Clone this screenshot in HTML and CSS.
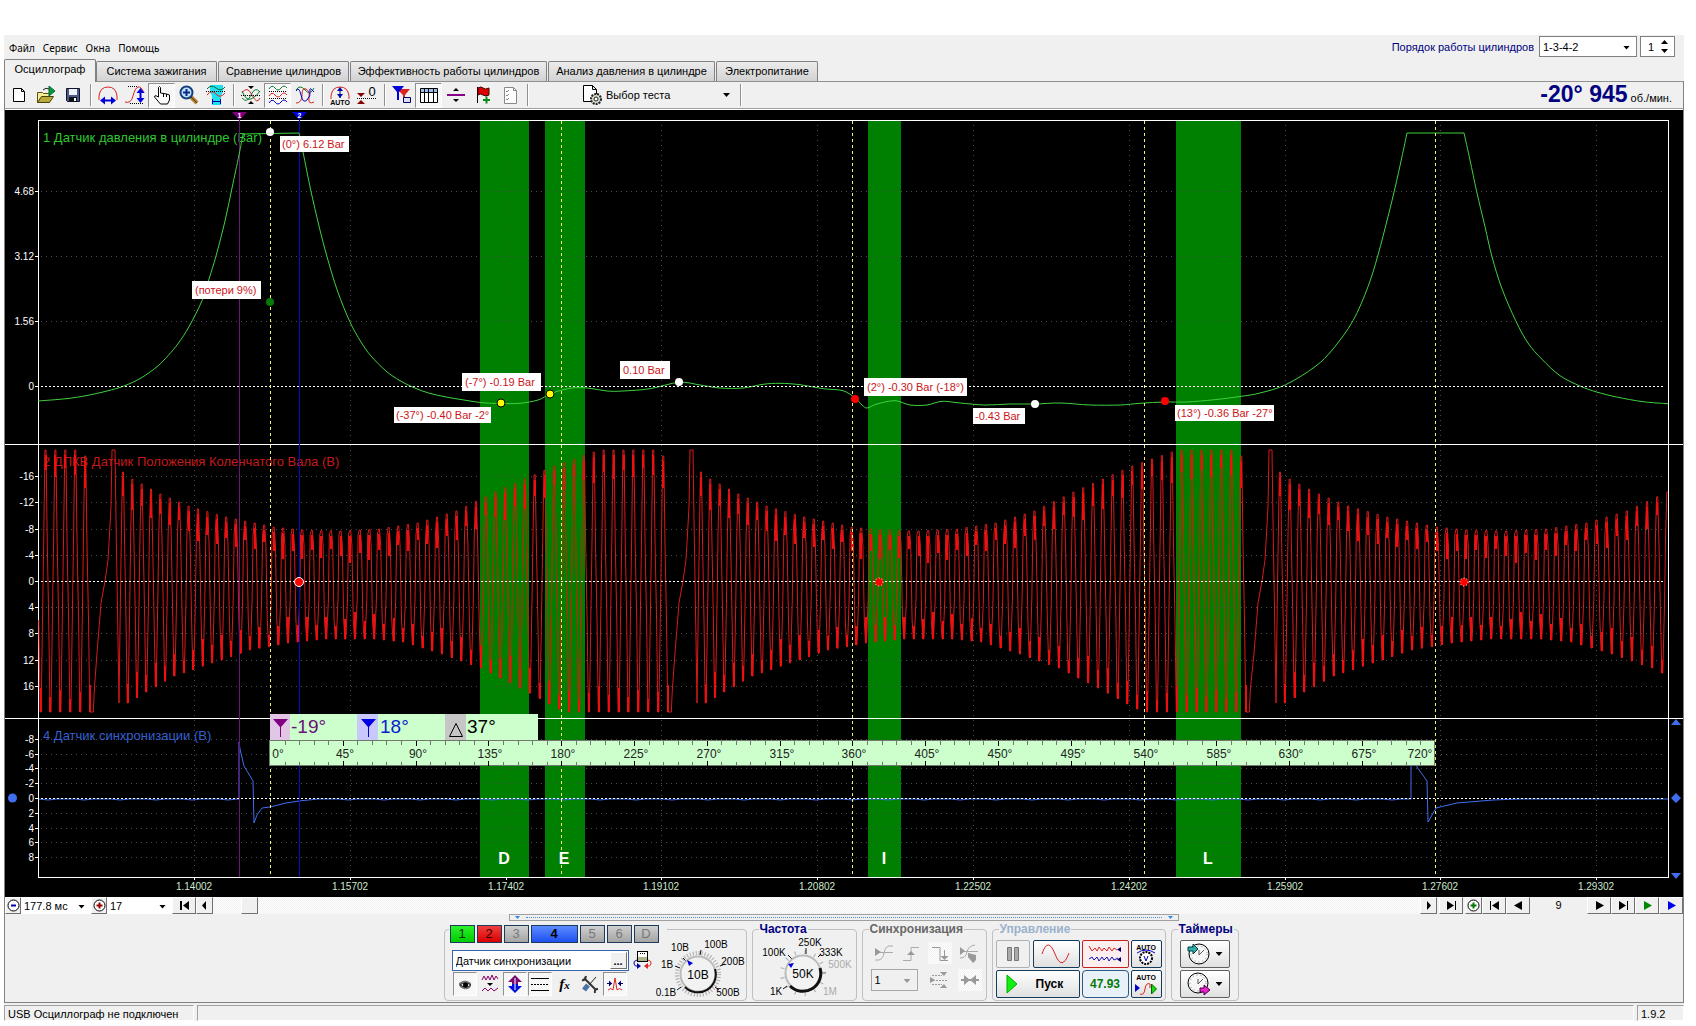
FILE: index.html
```html
<!DOCTYPE html>
<html lang="ru">
<head>
<meta charset="utf-8">
<title>USB Осциллограф</title>
<link rel="stylesheet" href="styles.css">
</head>
<body>
<div class="window">
  <header class="header">
    <nav class="menu">
      <button type="button">Файл</button>
      <button type="button">Сервис</button>
      <button type="button">Окна</button>
      <button type="button">Помощь</button>
    </nav>
    <div class="order">
      <label for="order">Порядок работы цилиндров</label>
      <span class="combo combo-order"><select id="order"><option>1-3-4-2</option></select></span>
      <span class="spin"><input type="text" value="1" aria-label="Номер цилиндра"><i></i></span>
    </div>
  </header>

  <nav class="tabs">
    <button type="button" class="tab tab-on w1">Осциллограф</button>
    <button type="button" class="tab w2">Система зажигания</button>
    <button type="button" class="tab w3">Сравнение цилиндров</button>
    <button type="button" class="tab w4">Эффективность работы цилиндров</button>
    <button type="button" class="tab w5">Анализ давления в цилиндре</button>
    <button type="button" class="tab w6">Электропитание</button>
  </nav>

  <main class="workspace">
    <div class="toolbar">
      <button type="button" class="tool" aria-label="Новый"><svg width="20" height="20"><path d="M4.500 3.500h8l3 3v10h-11z M12.500 3.500v3h3" fill="#fff" stroke="#000"/></svg></button>
      <button type="button" class="tool" aria-label="Открыть"><svg width="20" height="20"><path d="M1.500 17.500v-10h5l1 1h6v3" fill="#f5ec9a" stroke="#5a5208"/><path d="M1.500 17.500l4-6h12l-4 6z" fill="#b8ab3a" stroke="#4a4208"/><path d="M13 1l6 5-6 5z" fill="#0a9a2a" stroke="#064"/><path d="M7 5q3-3 6-1" fill="none" stroke="#222"/></svg></button>
      <button type="button" class="tool" aria-label="Сохранить"><svg width="20" height="20"><path d="M3.500 3.500h13v13h-12l-1-1z" fill="#4b5a86" stroke="#10142a"/><path d="M6 4h8v6H6z" fill="#eef2fa"/><path d="M6 12h8v4H6z" fill="#111"/><path d="M11 13h2v3h-2z" fill="#fff"/></svg></button>
      <span class="sep"></span>
      <button type="button" class="tool" aria-label="Ширина"><svg width="20" height="20"><path d="M1 15V11Q2 2 10 2t9 9v4" fill="none" stroke="#d22"/><path d="M5 15.500h10" stroke="#00c" stroke-width="2"/><path d="M2 15.500l5-4v8zM18 15.500l-5-4v8z" fill="#00d"/></svg></button>
      <button type="button" class="tool" aria-label="Высота"><svg width="22" height="20"><path d="M1 17q6 2 8-6t5-9 6 6" fill="none" stroke="#d22"/><path d="M4 1.500h10M6 18.500h14" stroke="#000" stroke-dasharray="1 1"/><path d="M16.500 5v11" stroke="#00d" stroke-width="2"/><path d="M16.500 3l4 5h-8zM16.500 18l4-5h-8z" fill="#00d"/></svg></button>
      <button type="button" class="tool tool-on" aria-label="Рука"><svg width="20" height="20"><path d="M6.500 12V2.500q1-2 2 0V8l3 .5 3 .5 3 1v5l-2 4h-7l-6-7q0-2 2-1z" fill="#fff" stroke="#000"/><path d="M11.500 8v4M14.500 9v3" stroke="#000"/></svg></button>
      <button type="button" class="tool" aria-label="Лупа"><svg width="20" height="20"><path d="M12 12l6 6" stroke="#b08030" stroke-width="4"/><path d="M12 12l6 6" stroke="#5a3a10"/><circle cx="7.500" cy="7.500" r="6" fill="#bfe0fa" stroke="#13407a" stroke-width="2"/><path d="M4 7.500h7M7.500 4v7" stroke="#0a2a8a" stroke-width="2"/></svg></button>
      <button type="button" class="tool" aria-label="Обзор"><svg width="20" height="20"><path d="M4 0h13v7l-2 4v9H6v-9L4 7z" fill="#1fe0f0"/><path d="M1 4q4-5 9-1t9-1" fill="none" stroke="#063"/><path d="M1 10q5-6 9-1t9-1" fill="none" stroke="#d22"/><path d="M0 6.500h20" stroke="#000" stroke-dasharray="1 1"/><path d="M6 16.500h9M6.500 14v5M14.500 14v5" stroke="#00a"/></svg></button>
      <span class="sep"></span>
      <button type="button" class="tool" aria-label="Совместить"><svg width="20" height="20"><path d="M1 8q5-8 10 2t8 3" fill="none" stroke="#d22"/><path d="M1 13q5 6 9-3t9-3" fill="none" stroke="#0a7a2a"/><path d="M1 6q4 10 9 8t9-8" fill="none" stroke="#0a7a2a"/><path d="M0 10.500h20" stroke="#000" stroke-dasharray="1 1"/><path d="M7 1h6l-3 3zM7 19h6l-3-3z" fill="#000"/></svg></button>
      <button type="button" class="tool tool-on" aria-label="Разделить"><svg width="20" height="20"><path d="M1 4q3-5 6-1t6 0 6 0" fill="none" stroke="#0a7a2a"/><path d="M1 11q3-5 6-1t6 0 6 0" fill="none" stroke="#d22"/><path d="M1 18q3-5 6-1t6 0 6 0" fill="none" stroke="#00b"/><path d="M1 6.500h18M1 13.500h18" stroke="#000" stroke-dasharray="1 1"/></svg></button>
      <button type="button" class="tool" aria-label="Наложить"><svg width="20" height="20"><path d="M1 5q4-6 9 0t9-2" fill="none" stroke="#0a7a2a"/><path d="M1 18Q7 18 7 10t4-6 3 9 5 4" fill="none" stroke="#d22"/><path d="M1 6q3-5 5 4t6 5 3-9 4 1" fill="none" stroke="#00c"/></svg></button>
      <span class="sep"></span>
      <button type="button" class="tool" aria-label="Авто"><svg width="20" height="20"><path d="M1 14V11Q2 2 10 2t9 9v3" fill="none" stroke="#d22"/><path d="M10 4v9" stroke="#006" stroke-width="1"/><path d="M10 2l3 4H7zM10 13l3-4H7z" fill="#00a"/><text x="10" y="20" class="i-auto">AUTO</text></svg></button>
      <button type="button" class="tool" aria-label="Ноль"><svg width="22" height="20"><path d="M1 8h8l-4 4zM1 19h8l-4-4z" fill="#800"/><path d="M1 13.500h19" stroke="#000" stroke-dasharray="1 1"/><text x="16" y="11" class="i-num">0</text></svg></button>
      <span class="sep"></span>
      <button type="button" class="tool" aria-label="Фильтр"><svg width="20" height="20"><path d="M5 4h13l-5 6v6h-2v-6z" fill="#d22"/><path d="M0 1h12L7 7v8H5V7z" fill="#00d"/><path d="M11.500 12.500h7v5h-7z" fill="#dde" stroke="#006"/></svg></button>
      <button type="button" class="tool tool-on" aria-label="Таблица"><svg width="20" height="20"><path d="M1.500 3.500h17v14h-17z" fill="#fff" stroke="#000"/><path d="M2 4h16v3H2z" fill="#9cc0ea"/><path d="M1 7.500h18M5.500 4v14M9.500 4v14M14.500 4v14" stroke="#000"/></svg></button>
      <button type="button" class="tool" aria-label="Линия"><svg width="20" height="20"><path d="M1 10h18" stroke="#808" stroke-width="2"/><path d="M7 6h6l-3-3zM7 14h6l-3 3z" fill="#000"/></svg></button>
      <button type="button" class="tool" aria-label="Флаг"><svg width="20" height="20"><path d="M4.500 2v16" stroke="#000"/><path d="M5 3q3-2 5 0t6 0v7q-3 2-6 0t-5 0z" fill="#d00" stroke="#400"/><path d="M10 15h7M13.500 11.500v7" stroke="#0a8a1a" stroke-width="2"/></svg></button>
      <button type="button" class="tool" aria-label="Список"><svg width="20" height="20"><path d="M4.500 2.500h9l3 3v13h-12z" fill="#fff" stroke="#888"/><path d="M6 6l1 1 2-2M6 10l1 1 2-2M6 14l1 1 2-2M13.500 2.500v3h3" fill="none" stroke="#888"/></svg></button>
      <span class="sep"></span>
      <button type="button" class="test"><svg width="22" height="22"><path d="M2.500 1.500h9l4 4v12h-13z M11.500 1.500v4h4" fill="#fff" stroke="#000"/><circle cx="15" cy="15" r="5" fill="#d5dccb" stroke="#222" stroke-width="2" stroke-dasharray="2 1"/><circle cx="15" cy="15" r="2" fill="#fff" stroke="#222"/></svg><span>Выбор теста</span><i class="caret"></i></button>
      <span class="sep"></span>
      <p class="speed"><b>-20° 945</b> об./мин.</p>
    </div>

    <svg class="chart" viewBox="5 110 1678 787" role="img" aria-label="Осциллограмма">
      <defs><clipPath id="bandclip"><rect x="480" y="120" width="49" height="757"/><rect x="545" y="120" width="40" height="757"/><rect x="868" y="120" width="33" height="757"/><rect x="1176" y="120" width="65" height="757"/></clipPath></defs>
      <g class="bands"><rect x="480" y="120" width="49" height="757"/><rect x="545" y="120" width="40" height="757"/><rect x="868" y="120" width="33" height="757"/><rect x="1176" y="120" width="65" height="757"/></g>
      <path id="grid" class="grid"/>
      <path id="ticks" class="axis"/>
      <g id="scale" class="scale"></g>
      <g id="times" class="times"></g>
      <path class="frame" d="M38.500 877.500v-757h1630v757zM5 444.500h1678M5 718.500h1678"/>

      <text x="43" y="142" class="title t-green">1 Датчик давления в цилиндре (Bar)</text>
      <text x="43" y="466" class="title t-red">2 ДПКВ Датчик Положения Коленчатого Вала (В)</text>
      <text x="43" y="740" class="title t-blue">4 Датчик синхронизации (В)</text>

      <path id="teeth" class="teeth"/>
      <path id="teeth-band" class="teeth teeth-band" clip-path="url(#bandclip)"/>
      <path id="tips" class="tips"/>
      <path id="sync" class="sync"/>
      <path class="cursor c-purple" d="M239.500 119v758"/>
      <path class="cursor c-blue" d="M299.500 119v758"/>
      <path id="pressure" class="pressure"/>
      <path class="zero" d="M41 386.500h1624M41 581.500h1624M41 798.500h1624"/>
      <path class="degree" d="M270.500 121v756M561.500 121v756M852.500 121v756M1144.500 121v756M1435.500 121v756"/>
      <path class="m-purple" d="M232 112h15l-7.500 8z"/><text x="239.500" y="118" class="mark">1</text>
      <path class="m-blue" d="M292 112h15l-7.500 8z"/><text x="299.500" y="118" class="mark">2</text>

      <g class="boxes">
        <rect x="280" y="136" width="69" height="16"/><rect x="192" y="281" width="69" height="18"/>
        <rect x="462" y="373" width="79" height="18"/><rect x="394" y="407" width="97" height="16"/>
        <rect x="620" y="361" width="50" height="18"/><rect x="864" y="378" width="103" height="18"/>
        <rect x="973" y="408" width="52" height="16"/><rect x="1175" y="405" width="99" height="16"/>
      </g>
      <g class="notes">
        <text x="282" y="148">(0°) 6.12 Bar</text><text x="195" y="294">(потери 9%)</text>
        <text x="465" y="386">(-7°) -0.19 Bar</text><text x="396" y="419">(-37°) -0.40 Bar -2°</text>
        <text x="623" y="374">0.10 Bar</text><text x="867" y="391">(2°) -0.30 Bar (-18°)</text>
        <text x="975" y="420">-0.43 Bar</text><text x="1177" y="417">(13°) -0.36 Bar -27°</text>
      </g>
      <g class="d-white"><circle cx="270" cy="132" r="4"/><circle cx="679" cy="382" r="4"/><circle cx="1035" cy="404" r="4"/></g>
      <circle class="d-green" cx="270" cy="302" r="4"/>
      <g class="d-yellow"><circle cx="501" cy="403" r="4"/><circle cx="550" cy="394" r="4"/></g>
      <g class="d-red"><circle cx="855" cy="399" r="4"/><circle cx="1165" cy="401" r="4"/></g>
      <circle class="d-ring" cx="299" cy="582" r="4.500"/>
      <g class="d-ring d-dash"><circle cx="879" cy="582" r="4"/><circle cx="1464" cy="582" r="4"/></g>

      <g class="letters"><text x="504" y="864">D</text><text x="564" y="864">E</text><text x="884" y="864">I</text><text x="1208" y="864">L</text></g>
      <g class="handles"><circle cx="12.500" cy="798" r="4.500"/><path d="M1676 793l5 5-5 5-5-5zM1671 725h10l-5-6zM1671 873h10l-5 6z"/></g>

      <rect class="mint" x="270" y="714" width="268" height="26"/>
      <rect x="270" y="714" width="20" height="26" fill="#e2c6e6"/><rect x="357" y="714" width="21" height="26" fill="#c8c8fb"/><rect x="445" y="714" width="21" height="26" fill="#c6c6c6"/>
      <path d="M273 719h15l-7 8v10h-1v-10z" fill="#800080"/><path d="M361 719h15l-7 8v10h-1v-10z" fill="#0000e0"/><path d="M449.500 736.500h13l-6.500-13z" fill="none" stroke="#000"/>
      <g class="angles"><text x="291" y="733" fill="#6a1478">-19°</text><text x="380" y="733" fill="#0a20d0">18°</text><text x="467" y="733" fill="#000">37°</text></g>
      <rect class="ruler" x="269.500" y="740.500" width="1165" height="25"/>
      <path id="minor" class="minor"/><path id="major" class="major"/>
      <g id="degrees" class="degrees"></g>
    </svg>

    <div class="nav">
      <button type="button" class="nb n16" aria-label="Меньше"><svg width="15" height="15"><circle cx="7.500" cy="7.500" r="5.500" fill="#fff" stroke="#000"/><path d="M5 7.500h5" stroke="#00a" stroke-width="2"/></svg></button>
      <span class="combo combo-flat"><select aria-label="Длительность"><option>177.8 мс</option></select></span>
      <button type="button" class="nb n16" aria-label="Больше"><svg width="15" height="15"><circle cx="7.500" cy="7.500" r="5.500" fill="#fff" stroke="#000"/><path d="M4.500 7.500h6M7.500 4.500v6" stroke="#900" stroke-width="2"/></svg></button>
      <span class="combo combo-flat combo-wide"><select aria-label="Масштаб"><option>17</option></select></span>
      <button type="button" class="nb n24" aria-label="В начало"><svg width="11" height="9"><path d="M1 0h2v9H1zM10 0v9L4 4.500z"/></svg></button>
      <button type="button" class="nb n17" aria-label="Назад"><svg width="5" height="9"><path d="M4 0v9L0 4.500z"/></svg></button>
      <div class="track"><div class="thumb"></div></div>
      <button type="button" class="nb n17" aria-label="Вперёд"><svg width="5" height="9"><path d="M1 0v9l4-4.500z"/></svg></button>
      <button type="button" class="nb n24 gap2" aria-label="В конец"><svg width="11" height="9"><path d="M9 0h1v9H9zM1 0v9l7-4.500z"/></svg></button>
      <button type="button" class="nb n17" aria-label="Добавить"><svg width="15" height="15"><circle cx="7.500" cy="7.500" r="5.500" fill="#fff" stroke="#000"/><path d="M4.500 7.500h6M7.500 4.500v6" stroke="#070" stroke-width="2"/></svg></button>
      <button type="button" class="nb n24" aria-label="Первый кадр"><svg width="11" height="9"><path d="M1 0h1v9H1zM10 0v9L3 4.500z"/></svg></button>
      <button type="button" class="nb n24" aria-label="Предыдущий кадр"><svg width="9" height="9"><path d="M8 0v9L0 4.500z"/></svg></button>
      <output class="page">9</output>
      <button type="button" class="nb n24" aria-label="Следующий кадр"><svg width="9" height="9"><path d="M1 0v9l8-4.500z"/></svg></button>
      <button type="button" class="nb n24" aria-label="Последний кадр"><svg width="11" height="9"><path d="M9 0h1v9H9zM1 0v9l7-4.500z"/></svg></button>
      <button type="button" class="nb n24" aria-label="Играть"><svg width="9" height="9"><path d="M1 0v9l8-4.500z" fill="#080"/></svg></button>
      <button type="button" class="nb n24" aria-label="Играть всё"><svg width="9" height="9"><path d="M1 0v9l8-4.500z" fill="#00e"/></svg></button>
    </div>

    <div class="splitter"><i></i></div>

    <div class="panels">
      <section class="panel channel" aria-label="Канал">
        <div class="chan-left">
          <div class="chans">
            <button type="button" class="ch ch-green">1</button><button type="button" class="ch ch-red">2</button><button type="button" class="ch">3</button><button type="button" class="ch ch-blue">4</button><button type="button" class="ch">5</button><button type="button" class="ch">6</button><button type="button" class="ch">D</button>
          </div>
          <div class="sensor">
            <span class="field"><input type="text" value="Датчик синхронизации" aria-label="Датчик"><button type="button" aria-label="Выбрать датчик">...</button></span>
            <svg width="19" height="19"><rect x="4.500" y="1.500" width="10" height="10" fill="#fff" stroke="#000"/><path d="M5 7h9v4H5z" fill="#a9b58a"/><path d="M7 3.500h5" stroke="#000" stroke-dasharray="1 1"/><path d="M4 10q-4 1-3 4t4 2" fill="none" stroke="#00a"/><path d="M15 10q4 1 3 4t-4 2" fill="none" stroke="#d22"/><path d="M8 16l-4-3v6z" fill="#00a"/><path d="M11 16l4-3v6z" fill="#d22"/></svg>
          </div>
          <div class="modes">
            <button type="button" class="mode on" aria-label="Показать"><svg width="20" height="20"><path d="M4 9q6-5 12 0v3q-2 4-7 3-4-1-5-4z" fill="#77776f"/><path d="M5 11q5-4 11 0-5 4-11 0z" fill="#eee" stroke="#222"/><circle cx="10.500" cy="11" r="2.500" fill="#000"/></svg></button>
            <button type="button" class="mode" aria-label="Фильтр"><svg width="20" height="20"><path d="M2 6l2-4 2 4 2-4 2 4 2-5 2 5 2-4 2 3" fill="none" stroke="#806" stroke-width="1"/><path d="M7 9h6l-3 3z"/><path d="M2 17l3-3 3 3 3-3 3 3 4-3" fill="none" stroke="#806"/></svg></button>
            <button type="button" class="mode on" aria-label="Инверсия"><svg width="20" height="20"><path d="M10 1l7 7h-4v2H7V8H3z" fill="#7a0a70"/><path d="M10 19l7-7h-4v-2H7v2H3z" fill="#0010e0"/><path d="M10 4v12" stroke="#fff" stroke-width="1"/></svg></button>
            <button type="button" class="mode on" aria-label="Уровни"><svg width="20" height="20"><path d="M1 4.500h18M1 16.500h18" stroke="#000"/><path d="M1 10.500h18" stroke="#000" stroke-dasharray="2 1"/></svg></button>
            <button type="button" class="mode fx">f<small>x</small></button>
            <button type="button" class="mode" aria-label="Настройки"><svg width="20" height="20"><path d="M4 4l12 12" stroke="#333" stroke-width="2"/><path d="M16 3l-7 8" stroke="#222" stroke-width="1"/><path d="M8 11l-4 5" stroke="#4a74a8" stroke-width="5"/><path d="M2 6q3 1 4-4M18 15q-4 0-3 4" fill="none" stroke="#333" stroke-width="2"/></svg></button>
            <button type="button" class="mode on" aria-label="Импульс"><svg width="20" height="20"><path d="M3 16q3-3 5 0l2-12 2 12q2-3 5 0" fill="none" stroke="#d22"/><path d="M2 9.500h5M13 9.500h5" stroke="#006"/><path d="M7 9.500l-3-3v6zM13 9.500l3-3v6z" fill="#006"/></svg></button>
          </div>
        </div>
        <svg class="knob" viewBox="657 930 89 69" width="89" height="69">
          <circle cx="699" cy="974" r="21" class="ring"/>
          <path d="M684 958l4 4M702 950l-1 5M721 966l5-2M676 966l5 2M678 990l4-3M716 987l4 3" stroke="#111"/>
          <circle cx="699" cy="974" r="17.500" fill="#f2f2f2" stroke="#bbb" stroke-width="2"/><path d="M716 969a18 18 0 0 1-30 18" fill="none" stroke="#111" stroke-width="2"/><path d="M688 960l6 3-4 3z" fill="#00d"/>
          <text x="699" y="979" class="kv">10В</text>
          <g class="kl"><text x="681" y="951">10В</text><text x="717" y="948">100В</text><text x="734" y="965">200В</text><text x="729" y="996">500В</text><text x="668" y="968">1В</text><text x="667" y="996">0.1В</text></g>
        </svg>
      </section>

      <fieldset class="panel freq"><legend>Частота</legend>
        <svg class="knob" viewBox="753 936 103 63" width="103" height="63">
          <circle cx="803" cy="974" r="21" class="ring ring-wide"/>
          <path d="M788 956l4 4M806 949v6M821 955l-3 3M783 990l4-3" stroke="#111"/>
          <circle cx="803" cy="974" r="17.500" fill="#f2f2f2" stroke="#bbb" stroke-width="2"/><path d="M820 969a18 18 0 0 1-30 18" fill="none" stroke="#111" stroke-width="3"/><path d="M788 965l6-1-3 5z" fill="#00d"/>
          <text x="803" y="979" class="kv">50K</text>
          <g class="kl"><text x="774" y="957">100K</text><text x="810" y="947">250K</text><text x="831" y="957">333K</text><text x="840" y="969" fill="#aaa">500K</text><text x="830" y="996" fill="#aaa">1M</text><text x="776" y="996">1K</text></g>
        </svg>
      </fieldset>

      <fieldset class="panel trig"><legend>Синхронизация</legend>
        <div class="trig-row">
          <svg width="20" height="20"><path d="M1 17h4q4-1 5-7t5-7h4M1 9.500h18" fill="none" stroke="#aaa"/><path d="M1 5l6 4-6 4z" fill="#999"/></svg>
          <svg width="20" height="20"><path d="M2 17.500h8v-13h8" fill="none" stroke="#aaa"/><path d="M10 8l4 4H6z" fill="#999"/></svg>
          <svg width="24" height="22" class="checked"><path d="M4 5.500h8v13h8M16.500 8v8" fill="none" stroke="#999"/><path d="M16.500 18l4-4h-8z" fill="#999"/></svg>
          <svg width="20" height="20"><path d="M1 15q6 0 7-6t8-7M1 8.500h18" fill="none" stroke="#aaa"/><path d="M1 4l5 4-5 4zM9 10l8 2v5l-3 3-5-6z" fill="#999"/></svg>
        </div>
        <div class="trig-row trig-low">
          <span class="combo combo-dis"><select aria-label="Канал синхронизации"><option>1</option></select></span>
          <svg width="20" height="20"><path d="M4 5.500h10M2 10.500h17M4 14.500h10" stroke="#999" stroke-dasharray="2 1"/><path d="M12 2h7l-3 4zM12 18h7l-3-4zM2 7l5 3-5 3z" fill="#999"/></svg>
          <svg width="24" height="22" class="checked"><path d="M3 11h18" stroke="#999" stroke-width="2"/><path d="M12 11L6 6v10zM12 11l6-5v10z" fill="#999"/></svg>
        </div>
      </fieldset>

      <fieldset class="panel control"><legend>Управление</legend>
        <button type="button" class="btn pause" aria-label="Пауза"><svg width="14" height="16"><path d="M1.500 1.500h4v13h-4zM8.500 1.500h4v13h-4z" fill="#aaa" stroke="#777"/></svg></button>
        <button type="button" class="btn" aria-label="Синус"><svg width="30" height="20"><path d="M1 10q6-18 13 0t14-1" fill="none" stroke="#d22" stroke-width="1"/></svg></button>
        <button type="button" class="btn btn-red" aria-label="Каналы"><svg width="34" height="20"><path d="M1 2l3 5 3-3 2 3 2-4 3 4 2-3 3 3 2-4 3 4 2-3 3 2" fill="none" stroke="#d22"/><path d="M1 15l3-2 2 3 3-3 2 4 3-4 2 3 3-3 2 4 3-4 2 3 4-2" fill="none" stroke="#11b"/><path d="M33 3v5l-4-2.500zM33 13v5l-4-2.500z" fill="#006"/></svg></button>
        <button type="button" class="btn" aria-label="Авто"><svg width="26" height="25"><text x="13" y="8" class="i-auto">AUTO</text><path d="M4 11q9-6 18 0" fill="none" stroke="#00c"/><circle cx="13" cy="16" r="6" fill="#fff" stroke="#000" stroke-width="2" stroke-dasharray="2 1"/><path d="M11 14l2 5 2-5" fill="none" stroke="#00c"/></svg></button>
        <button type="button" class="btn run"><svg width="12" height="20"><path d="M1 1l10 9-10 9z" fill="#1e1" stroke="#0a0"/></svg><span>Пуск</span></button>
        <button type="button" class="btn rate">47.93</button>
        <button type="button" class="btn" aria-label="Авто запуск"><svg width="26" height="25"><text x="13" y="8" class="i-auto">AUTO</text><path d="M7 22q4 2 5-5t5-5v4" fill="none" stroke="#d22"/><path d="M2 12l5 4-5 4z" fill="#00c"/><path d="M18.500 12l5 5-5 5z" fill="#1d1" stroke="#060"/></svg></button>
      </fieldset>

      <fieldset class="panel timers"><legend>Таймеры</legend>
        <button type="button" class="btn timer" aria-label="Таймер пуска"><svg width="26" height="24"><circle cx="13" cy="12" r="10" fill="#f6f6f6" stroke="#000" stroke-width="1"/><circle cx="13" cy="12" r="8" fill="none" stroke="#888" stroke-dasharray="1 3"/><path d="M13 13l5-5M13 13V8" stroke="#555"/><path d="M2 5h5V2l5 5-5 5V9H2z" fill="#3aa" stroke="#044"/></svg><i class="caret"></i></button>
        <button type="button" class="btn timer" aria-label="Таймер остановки"><svg width="26" height="24"><circle cx="12" cy="11" r="10" fill="#f6f6f6" stroke="#000" stroke-width="1"/><circle cx="12" cy="11" r="8" fill="none" stroke="#888" stroke-dasharray="1 3"/><path d="M12 12l5-5M12 12V7" stroke="#555"/><path d="M14 16h4v-3l6 5-6 5v-3h-4z" fill="#e2c" stroke="#404"/></svg><i class="caret"></i></button>
      </fieldset>
    </div>
  </main>

  <footer class="status"><span class="s1">USB Осциллограф не подключен</span><span class="s2"></span><span class="s3">1.9.2</span></footer>
</div>
<script src="app.js"></script>
</body>
</html>
```
FILE: styles.css
```css
* { box-sizing: border-box; }
body { margin: 0; background: #fff; font: 11px/14px "Liberation Sans", Arial, sans-serif; color: #000; }
button, input, select { font: inherit; color: inherit; margin: 0; padding: 0; border: 0; background: none; border-radius: 0; }
svg { display: block; flex: none; }
p { margin: 0; }
.window { margin: 35px 12px 0 4px; background: #f0f0f0; }

.header { display: flex; justify-content: space-between; height: 24px; padding: 1px 9px 0 5px; }
.menu { display: flex; gap: 8px; padding-top: 5px; font: 10px/14px "Noto Sans", sans-serif; align-items: flex-start; }
.order { display: flex; align-items: flex-start; color: #000080; }
.order label { padding: 4px 5px 0 0; }
.combo { position: relative; display: flex; color: #000; }
.combo select { appearance: none; width: 100%; height: 100%; padding: 0 0 0 3px; }
.combo::after, .caret { content: ""; width: 7px; height: 4px; background: #000; clip-path: polygon(0 0, 100% 0, 50% 100%); }
.combo::after { position: absolute; right: 6px; top: 50%; margin-top: -1px; pointer-events: none; }
.combo-order { width: 98px; height: 21px; background: #fff; border: 1px solid #808080; margin-right: 3px; }
.spin { position: relative; width: 35px; height: 21px; background: #fff; border: 1px solid #808080; color: #000; }
.spin input { width: 24px; height: 19px; padding-left: 7px; display: block; }
.spin i { position: absolute; right: 6px; top: 3px; width: 7px; height: 13px; background: #000; clip-path: polygon(50% 0, 100% 30%, 0 30%, 0 70%, 100% 70%, 50% 100%, 0 70%, 0 30%); }

.tabs { display: flex; align-items: flex-end; gap: 1px; height: 22px; }
.tab { height: 20px; padding-bottom: 1px; border: 1px solid #808080; border-bottom: 0; border-radius: 2px 2px 0 0; background: linear-gradient(#ececec, #d2d2d2); white-space: nowrap; text-align: center; }
.tab-on { position: relative; height: 23px; margin-bottom: -1px; background: #f0f0f0; padding-bottom: 4px; }
.w1 { width: 92px; margin-right: -1px; }
.w2 { width: 121px; }
.w3 { width: 131px; }
.w4 { width: 197px; }
.w5 { width: 167px; }
.w6 { width: 102px; }

.workspace { border: 1px solid #808080; border-top-color: #909090; }
.toolbar { display: flex; align-items: center; height: 28px; padding: 0 10px 1px 0; border-bottom: 1px solid #fff; box-shadow: inset 0 -1px #a0a0a0; }
.tool { width: 27px; height: 25px; display: grid; place-items: center; }
.tool-on, .mode.on { border: 1px solid #a0a0a0; border-color: #909090 #fff #fff #909090; background: repeating-conic-gradient(#fff 0 25%, #f0f0f0 0 50%) 0 0 / 2px 2px; }
.sep { width: 2px; height: 22px; margin: 0 2px 0 4px; border-left: 1px solid #909090; border-right: 1px solid #fff; }
.test { display: flex; align-items: center; width: 205px; height: 25px; padding-left: 50px; gap: 3px; }
.test .caret { margin-left: auto; margin-right: 6px; }
.speed { margin: 2px 1px 0 auto; line-height: 24px; white-space: nowrap; }
.speed b { font-size: 23px; color: #000080; }
.i-auto { font: bold 7px "Liberation Sans", sans-serif; text-anchor: middle; }
.i-num { font: 13px "Liberation Sans", sans-serif; text-anchor: middle; }

.chart { width: 100%; height: auto; background: #000; font-family: "Liberation Sans", Arial, sans-serif; }
.bands { fill: #008000; }
.grid { fill: none; stroke: #4c4c4c; stroke-dasharray: 1 4; shape-rendering: crispEdges; }
.axis, .frame { fill: none; stroke: #fff; shape-rendering: crispEdges; }
.scale { fill: #fff; font-size: 10px; text-anchor: end; }
.times { fill: #cfe8cf; font-size: 10px; text-anchor: middle; }
.title { font-size: 13px; }
.t-green { fill: #2fc82f; }
.t-red { fill: #c41a1a; }
.t-blue { fill: #3560d0; }
.teeth { fill: none; stroke: #d81a1a; }
.teeth-band { stroke: #8c4000; }
.tips { fill: none; stroke: #ee1010; stroke-width: 2; shape-rendering: crispEdges; }
.sync { fill: none; stroke: #3f6ff0; }
.pressure { fill: none; stroke: #3fd23f; }
.zero { stroke: #fff; stroke-dasharray: 2 2; shape-rendering: crispEdges; }
.degree { stroke: #f4f070; stroke-dasharray: 3 3; shape-rendering: crispEdges; }
.cursor { shape-rendering: crispEdges; }
.c-purple { stroke: #6a1878; }
.c-blue { stroke: #0808c8; }
.m-purple { fill: #800080; }
.m-blue { fill: #0000d8; }
.mark { fill: #fff; font-weight: bold; font-size: 7px; text-anchor: middle; }
.boxes { fill: #fff; }
.notes { fill: #cc1418; font-size: 11px; }
.d-white { fill: #fff; }
.d-green { fill: #087808; }
.d-yellow { fill: #ff0; stroke: #000; }
.d-red { fill: #f00; }
.d-ring { fill: #f00; stroke: #fff; }
.d-dash { stroke-dasharray: 1 2; }
.letters { fill: #fff; font-weight: bold; font-size: 16px; text-anchor: middle; }
.handles { fill: #3f6ff0; }
.mint, .ruler { fill: #ccffcc; }
.ruler { stroke: #707870; }
.angles { font-size: 19px; }
.minor { stroke: #707870; shape-rendering: crispEdges; }
.major { stroke: #000; shape-rendering: crispEdges; stroke-width: 1; }
.degrees { font-size: 12px; text-anchor: middle; fill: #222; }

.nav { display: flex; height: 17px; background: #f0f0f0; }
.nb { display: grid; place-items: center; height: 17px; border: 1px solid; border-color: #fff #707070 #707070 #fff; background: #f0f0f0; }
.n16 { width: 16px; }
.n17 { width: 17px; }
.n24 { width: 24px; }
.gap2 { margin: 0 2px; }
.combo-flat { width: 70px; background: #fff; }
.combo-wide { width: 65px; }
.track { flex: 1; background: repeating-conic-gradient(#fff 0 25%, #f0f0f0 0 50%) 0 0 / 2px 2px; padding-left: 28px; }
.thumb { width: 17px; height: 17px; background: #f0f0f0; border: 1px solid; border-color: #fff #707070 #707070 #fff; }
.page { flex: none; width: 57px; text-align: center; line-height: 17px; }

.splitter { width: 670px; height: 7px; margin: 0 auto; border: 1px solid #a0a0a0; padding: 2px 16px; position: relative; }
.splitter i { display: block; border-top: 1px dotted #4a90d8; }
.splitter::before, .splitter::after { content: ""; position: absolute; top: 1px; width: 5px; height: 3px; background: #2f8ae0; clip-path: polygon(0 0, 100% 0, 50% 100%); }
.splitter::before { left: 5px; }
.splitter::after { right: 5px; }

.panels { display: flex; justify-content: center; gap: 5px; padding: 2px 6px 1px 0; height: 81px; }
.panel { border: 1px solid #c0c0c0; border-radius: 4px; margin: 0; padding: 0; min-width: 0; height: 78px; }
.panel legend { margin-left: 6px; padding: 0 1px; font-weight: bold; font-size: 12px; line-height: 12px; color: #000080; }
.channel { display: flex; width: 303px; height: 72px; margin-top: 6px; }
.chan-left { width: 211px; }
.chans { display: flex; gap: 2px; width: 218px; height: 18px; margin: -5px 0 0 4px; background: #f0f0f0; padding-left: 1px; }
.ch { width: 25px; height: 18px; border: 1px solid #1c3a5a; background: linear-gradient(#d0d0d0, #a4a4a4); color: #777; font-size: 13px; text-align: center; }
.ch-green { background: linear-gradient(#2cf02c, #0c0); color: #131; }
.ch-red { background: linear-gradient(#f04040, #d80000); color: #300; }
.ch-blue { width: 47px; background: linear-gradient(#5c8cff, #1e50f0); color: #000; font-weight: bold; }
.sensor { display: flex; gap: 4px; margin: 7px 0 0 7px; }
.field { display: flex; align-items: center; width: 177px; height: 21px; background: #fff; border: 1px solid #3464b4; padding: 1px; }
.field input { flex: 1; min-width: 0; padding-left: 2px; height: 17px; }
.field button { width: 17px; height: 17px; line-height: 10px; font-weight: bold; background: #f0f0f0; border: 1px solid; border-color: #fff #707070 #707070 #fff; }
.modes { display: flex; gap: 1px; margin: 1px 0 0 8px; }
.mode { width: 24px; height: 24px; display: grid; place-items: center; }
.fx { display: block; font: italic bold 15px/22px "Liberation Serif", serif; }
.fx small { font-size: 11px; }
.knob { font-family: "Liberation Sans", sans-serif; }
.kv { font-size: 12px; text-anchor: middle; }
.kl { font-size: 10px; text-anchor: middle; }
.ring { fill: none; stroke: #aaa; stroke-width: 4; stroke-dasharray: 1 2; }
.ring-wide { stroke-dasharray: 1 9; }
.freq { width: 105px; }
.trig { width: 125px; }
.panel.trig legend { color: #686868; }
.trig-row { display: flex; justify-content: space-between; align-items: center; padding: 7px 7px 0 11px; }
.trig-low { padding: 5px 4px 0 8px; }
.checked { background: repeating-conic-gradient(#fff 0 25%, #f0f0f0 0 50%) 0 0 / 2px 2px; }
.combo-dis { width: 47px; height: 22px; border: 1px solid #a8a8a8; }
.combo-dis::after { background: #999; }
.control { display: grid; grid-template-columns: 35px 47px 47px 31px; gap: 2px; width: 174px; padding: 5px 3px 0; align-content: start; }
.panel.control legend { margin-left: 3px; color: #9ab2cc; }
.btn { display: grid; place-items: center; height: 28px; border: 1px solid #123c5e; border-radius: 2px; background: linear-gradient(#fff, #e0e0e0); }
.control .btn { justify-self: stretch; }
.pause { border-color: #b0b0b0; width: 34px; background: #f0f0f0; }
.btn-red { border-color: #c82020; background: #fbeeee; }
.run { grid-column: span 2; display: flex; align-items: center; gap: 18px; padding-left: 9px; font-weight: bold; font-size: 12px; }
.rate { font-weight: bold; font-size: 12px; color: #087808; background: #e8f0f8; border-color: #2c5a86; border-radius: 4px; }
.timers { width: 68px; padding: 5px 8px 0; }
.panel.timers legend { margin-left: -2px; }
.timer { display: flex; align-items: center; width: 50px; border-color: #606060; margin-bottom: 2px; padding-left: 5px; gap: 4px; }

.status { display: flex; gap: 3px; padding-top: 2px; height: 18px; }
.status span { border: 1px solid #a0a0a0; border-right-color: #fff; border-bottom-color: #fff; padding: 1px 0 0 3px; white-space: nowrap; height: 16px; }
.s1 { width: 190px; }
.s2 { flex: 1; }
.s3 { width: 47px; }
```
FILE: app.js
```js
// Builds the oscilloscope traces, the grid and the degree ruler.
const set = (id, d) => document.getElementById(id).setAttribute('d', d);
const text = (parent, x, y, s) => {
  const t = document.createElementNS('http://www.w3.org/2000/svg', 'text');
  t.setAttribute('x', x);
  t.setAttribute('y', y);
  t.textContent = s;
  document.getElementById(parent).appendChild(t);
};

// Grid with value and time scales
const levels = [
  [191, '4.68'], [256, '3.12'], [321, '1.56'], [386, '0'],
  [476, '-16'], [502, '-12'], [529, '-8'], [555, '-4'], [581, '0'], [607, '4'], [633, '8'], [660, '12'], [686, '16'],
  [739, '-8'], [754, '-6'], [768, '-4'], [783, '-2'], [798, '0'], [813, '2'], [828, '4'], [842, '6'], [857, '8']
];
let grid = '', ticks = '';
for (const [y, s] of levels) {
  if (s !== '0') grid += `M41 ${y + 0.5}H1666`;
  ticks += `M35 ${y + 0.5}h4`;
  text('scale', 34, y + 4, s);
}
for (let i = 0; i < 10; i++) {
  const x = Math.round(194 + i * 155.8);
  grid += `M${x + 0.5} 125V875`;
  ticks += `M${x + 0.5} 877v3`;
  text('times', x, 890, (1.14002 + i * 0.017).toFixed(5));
}
set('grid', grid);
set('ticks', ticks);

// Cylinder pressure, three stretches joined at the clipped peaks
const stretches = [
  [[38,401],[66,398.7],[86,395.7],[107,391],[124,386],[141,378],[157,366.7],[168,355.7],[178.5,343],[189,326.7],[202,300.7],[209,279],[216,256],[225,221],[232,188],[239,155],[243,134]],
  [[299,133],[303,152],[310.7,190],[319,226],[327,256.7],[337.5,291],[350,322],[361,342],[371,356],[386,371],[400,380.7],[414,387.7],[428.6,393],[446,397],[464,400],[482,402.7],[501,403.5],[520,403.3],[538,400],[550,394],[562,390],[575,387.7],[590,388.3],[607,391],[623,391],[650,388.7],[679,382.3],[700,385],[720,388],[743,388],[763,384.3],[780,383.3],[800,384.7],[823,388.7],[843,390.7],[855,398],[862,405],[867,408],[877,404],[895,400.7],[910,405],[927,405],[942,401.3],[960,403],[985,405],[1010,404],[1035,404],[1060,403],[1090,405],[1120,405],[1140,403.3],[1165,402],[1186,402],[1214.5,399.7],[1240,396.5],[1260,393],[1285.7,384.7],[1315,366.7],[1333,349],[1353,320.7],[1368,286.7],[1378,255],[1388,216.7],[1395,188],[1401.7,158],[1407,133]],
  [[1464,133],[1470,160],[1476.7,191.7],[1485,226.7],[1492,256.7],[1501.7,288],[1515.7,320.7],[1528,343],[1541.7,359],[1560,375.7],[1580,386],[1596.7,392],[1616.7,397],[1643,401.7],[1668,403.7]]
];
const smooth = p => {
  let d = p[0].join(' ');
  for (let i = 0; i < p.length - 1; i++) {
    const a = p[i - 1] || p[i], b = p[i], c = p[i + 1], e = p[i + 2] || c;
    d += `C${b[0] + (c[0] - a[0]) / 6} ${b[1] + (c[1] - a[1]) / 6} ${c[0] - (e[0] - b[0]) / 6} ${c[1] - (e[1] - b[1]) / 6} ${c[0]} ${c[1]}`;
  }
  return d;
};
set('pressure', 'M' + stretches.map(smooth).join('L'));

// Crankshaft sensor: 58 teeth and a gap per revolution
const upper = [[0,450],[1,472],[2,479],[5,494],[8,506],[12,517],[17,527],[20,530],[24,531],[28,529],[32,523],[36,511],[40,492],[43,479],[46,466],[50,452],[51,450],[56,450],[57,456]];
const lower = [[0,703],[1,703],[3,692],[6,676],[10,663],[14,650],[18,643],[22,639],[27,639],[30,642],[34,654],[38,668],[42,688],[46,709],[47,712],[57,712]];
const at = (table, k) => {
  for (let i = 1; i < table.length; i++) {
    const [a, p] = table[i - 1], [b, q] = table[i];
    if (k <= b) return p + (q - p) * (k - a) / (b - a);
  }
  return table[table.length - 1][1];
};
const revolutions = [[-455, 1], [123, 1], [701, 1], [1280, 1.04]];
const wave = [];
let tips = '';
for (const [start, stretch] of revolutions) {
  const pos = k => start + stretch * (9.33 * (k - 1) + 0.00568 * (k - 1) * (k - 1));
  wave.push([start - 26, 653], [start - 22, 603], [start - 18, 581], [start - 15, 560], [start - 12, 507], [start - 11, 450], [start - 8, 450], [start - 7, 520], [start - 5, 640], [start - 4, 703]);
  for (let k = 1; k <= 57; k++) {
    const x = pos(k), half = (pos(k + 1) - x) / 2, top = at(upper, k), low = at(lower, k);
    wave.push([x - half * 0.55, 600], [x - half * 0.35, 535], [x - half * 0.12, top], [x + half * 0.1, top], [x + half * 0.35, 545], [x + half * 0.65, 620], [x + half * 0.9, low], [x + half * 1.1, low]);
    // steep flanks near the extremes read as solid bright strokes
    const tx = Math.round(x), bx = Math.round(x + half), len = 12 + (k * 7) % 16;
    if (tx > 40 && tx < 1667) tips += `M${tx} ${Math.round(top + 5)}v${len}`;
    if (bx > 40 && bx < 1667) tips += `M${bx} ${Math.round(low)}v${-len}`;
  }
  const end = pos(57);
  wave.push([end + 8, 712], [end + 9, 690]);
}
const shown = wave.filter(([x]) => x > 38 && x < 1668).map(([x, y]) => `${x.toFixed(1)} ${y.toFixed(1)}`);
set('teeth', 'M' + shown.join('L'));
set('teeth-band', 'M' + shown.join('L'));
set('tips', tips);

// Sync sensor
let sync = 'M39 799';
for (let x = 48; x < 239; x += 9) sync += `L${x} ${x % 4 ? 799 : 800}`;
sync += 'L239 799V742L240 749L244 766L253 781L254 823L257 815L262 808L270 807L286 803L299 801L318 799';
for (let x = 330; x < 1411; x += 9) sync += `L${x} ${x % 4 ? 799 : 800}`;
sync += 'L1411 799V745L1417 767L1427 781L1428 822L1436 808L1457 803L1493 800L1520 799H1668';
set('sync', sync);

// Degree ruler
let minor = '', major = '';
for (let i = 1; i < 80; i++) {
  const x = Math.round(270 + i * 14.56) + 0.5;
  if (i % 5) minor += `M${x} 741v4M${x} 762v3`;
  else major += `M${x} 741v5M${x} 761v5`;
}
set('minor', minor);
set('major', major);
for (let d = 0; d <= 720; d += 45) {
  const shift = d === 0 ? 8 : d === 720 ? -15 : 2;
  text('degrees', Math.round(270 + d * 1.618) + shift, 758, d + '°');
}
```
